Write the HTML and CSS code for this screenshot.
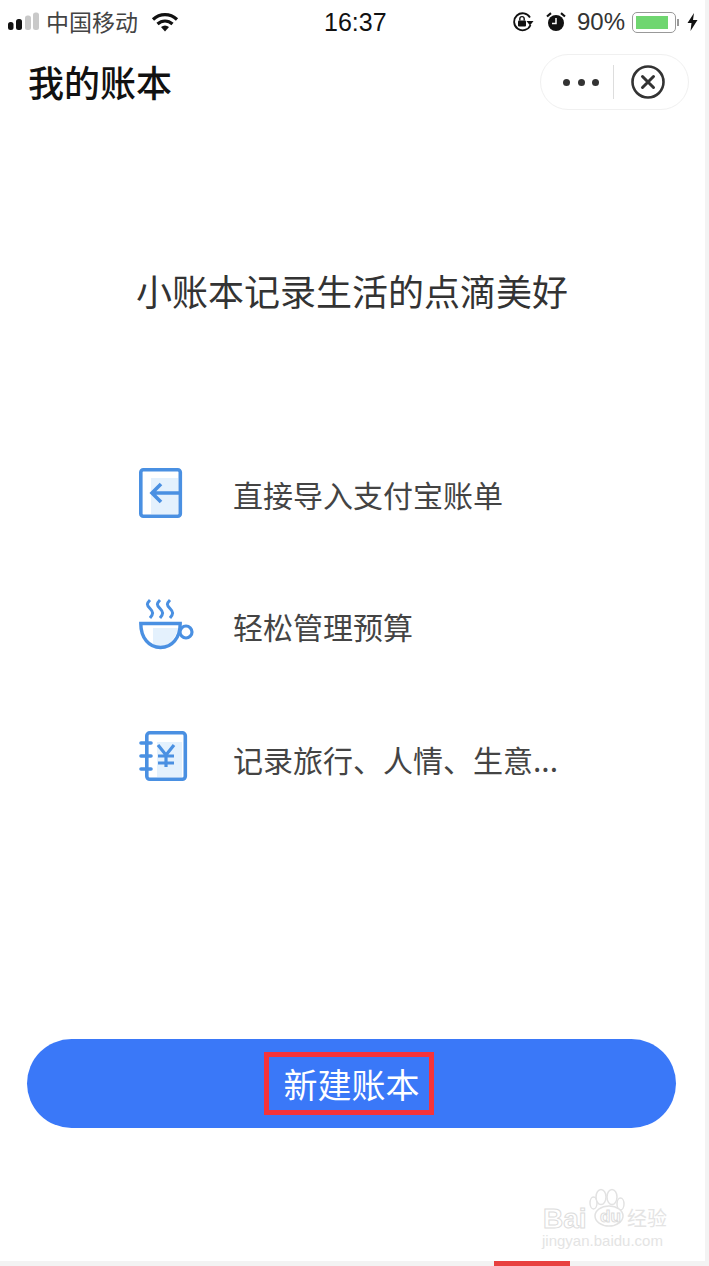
FILE: index.html
```html
<!DOCTYPE html>
<html lang="zh-CN">
<head>
  <meta charset="UTF-8" />
  <title>我的账本</title>
  <link rel="stylesheet" href="styles.css">
</head>
<body>
  <div class="screen">

    <div class="status-bar">
      <div class="status-left">
        <svg class="signal" width="32" height="20" viewBox="0 0 32 20">
          <rect x="0" y="10" width="5.5" height="8" rx="2.5" fill="#111"/>
          <rect x="8" y="7" width="6" height="11" rx="2.5" fill="#111"/>
          <rect x="17" y="3.5" width="6" height="14.5" rx="2.5" fill="#c9c9c9"/>
          <rect x="25" y="0.5" width="6" height="17.5" rx="2.5" fill="#c9c9c9"/>
        </svg>
        <span class="carrier">中国移动</span>
        <svg class="wifi" width="28" height="20" viewBox="0 0 28 20">
          <path d="M2 7.5 C9 1 19 1 26 7.5" fill="none" stroke="#111" stroke-width="3.2"/>
          <path d="M6.5 12 C11 8 17 8 21.5 12" fill="none" stroke="#111" stroke-width="3.2"/>
          <path d="M10 15 C12.5 13 15.5 13 18 15 L14 19.5Z" fill="#111"/>
        </svg>
      </div>
      <div class="status-time">16:37</div>
      <div class="status-right">
        <svg class="rotate-lock" width="22" height="20" viewBox="0 0 22 20">
          <path d="M18.5 13 A8.5 8.5 0 1 1 18 5.5" fill="none" stroke="#111" stroke-width="1.8"/>
          <path d="M21.5 9 L18 13.5 L14.5 9Z" fill="#111"/>
          <rect x="6" y="8.5" width="8" height="6" rx="1" fill="#111"/>
          <path d="M7.8 8.5 V6.8 A2.2 2.2 0 0 1 12.2 6.8 V8.5" fill="none" stroke="#111" stroke-width="1.4"/>
        </svg>
        <svg class="alarm" width="20" height="20" viewBox="0 0 20 20">
          <circle cx="10" cy="11" r="8" fill="#111"/>
          <path d="M10 6 V11.5 H6" fill="none" stroke="#fff" stroke-width="1.5"/>
          <path d="M1 4.5 L5 1.2 M19 4.5 L15 1.2" stroke="#111" stroke-width="2.2"/>
        </svg>
        <span class="battery-pct">90%</span>
        <div class="battery"><div class="battery-level"></div></div>
        <div class="battery-nub"></div>
        <svg class="bolt" width="11" height="18" viewBox="0 0 11 18">
          <path d="M7 0 L0.5 10 H4.5 L3.5 18 L10.5 7 H6Z" fill="#111"/>
        </svg>
      </div>
    </div>

    <div class="nav-bar">
      <h1 class="page-title">我的账本</h1>
      <div class="capsule">
        <div class="capsule-dots"><i></i><i></i><i></i></div>
        <div class="capsule-line"></div>
        <svg width="36" height="36" viewBox="0 0 36 36">
          <circle cx="18" cy="18" r="15.5" fill="none" stroke="#333" stroke-width="2.6"/>
          <path d="M12.5 12.5 L23.5 23.5 M23.5 12.5 L12.5 23.5" stroke="#333" stroke-width="3" stroke-linecap="round"/>
        </svg>
      </div>
    </div>

    <h2 class="slogan">小账本记录生活的点滴美好</h2>

    <div class="feature-list">
      <div class="feature">
        <svg width="60" height="60" viewBox="0 0 60 60">
          <rect x="14" y="13" width="27" height="36" fill="#e4f1fd"/>
          <rect x="3.8" y="4.8" width="39.5" height="46.5" rx="2.5" fill="none" stroke="#4a90e2" stroke-width="3.6"/>
          <path d="M15 28 H43 M24 19 L15 28 L24 37" fill="none" stroke="#4a90e2" stroke-width="3.6"/>
        </svg>
        <span>直接导入支付宝账单</span>
      </div>
      <div class="feature">
        <svg width="60" height="60" viewBox="0 0 60 60">
          <path d="M16 30 H41 C39 40 32 48 24 48 H16Z" fill="#e4f1fd"/>
          <path d="M3.8 25.5 H43.2 C43.2 40 35 49.5 23.5 49.5 C12 49.5 3.8 40 3.8 25.5Z" fill="none" stroke="#4a90e2" stroke-width="3.4"/>
          <circle cx="49" cy="34" r="6" fill="none" stroke="#4a90e2" stroke-width="3.2"/>
          <path d="M13 2 C9.5 5.5 9.5 7 13 10.5 C16.5 14 16.5 16 13 20 M23 2 C19.5 5.5 19.5 7 23 10.5 C26.5 14 26.5 16 23 20 M33 2 C29.5 5.5 29.5 7 33 10.5 C36.5 14 36.5 16 33 20" fill="none" stroke="#4a90e2" stroke-width="3"/>
        </svg>
        <span>轻松管理预算</span>
      </div>
      <div class="feature">
        <svg width="60" height="60" viewBox="0 0 60 60">
          <rect x="20" y="12" width="25" height="35" fill="#e4f1fd"/>
          <rect x="9.8" y="2.8" width="38.5" height="46.5" rx="3" fill="none" stroke="#4a90e2" stroke-width="3.6"/>
          <path d="M4 13 H14 M4 26 H14 M4 39 H14" stroke="#4a90e2" stroke-width="3.6" stroke-linecap="round"/>
          <path d="M21 15 L29 25 L37 15 M29 25 V37 M21 26 H37 M21 33 H37" fill="none" stroke="#4a90e2" stroke-width="3.2"/>
        </svg>
        <span>记录旅行、人情、生意...</span>
      </div>
    </div>

    <button class="create-btn"><span class="create-label">新建账本</span></button>

    <div class="watermark">
      <svg class="paw" width="40" height="40" viewBox="0 0 40 40">
        <g fill="#fff" stroke="#e2e2e2" stroke-width="1.5">
          <ellipse cx="4.5" cy="15" rx="3.5" ry="6"/>
          <ellipse cx="12" cy="9" rx="5" ry="7.5"/>
          <ellipse cx="23" cy="9" rx="5" ry="7.5"/>
          <ellipse cx="31.5" cy="16" rx="3.5" ry="6"/>
          <ellipse cx="20" cy="28" rx="14" ry="10"/>
        </g>
      </svg>
      <span class="wm-bai">Bai</span>
      <span class="wm-du">du</span>
      <span class="wm-jy">经验</span>
      <span class="wm-url">jingyan.baidu.com</span>
    </div>
  </div>
  <div class="page-foot"><div class="red-tab"></div></div>
</body>
</html>
```

FILE: styles.css
```css
* {
  box-sizing: border-box;
}

body {
  margin: 0;
  background-color: #f3f3f3;
  font-family: "Noto Sans CJK SC", "Liberation Sans", sans-serif;
  color: #333;
}

.screen {
  position: relative;
  width: 705px;
  height: 1261px;
  background-color: #fff;
}

.status-bar {
  display: flex;
  align-items: center;
  height: 44px;
  color: #222;
}

.status-left {
  display: flex;
  align-items: center;
  width: 324px;
  padding-left: 8px;
}

.signal {
  margin-right: 6px;
}

.carrier {
  font-size: 23px;
  color: #444;
  margin-right: 13px;
  padding-bottom: 2px;
}

.status-time {
  width: 181px;
  font-family: "Liberation Sans", sans-serif;
  font-size: 25px;
  color: #111;
}

.status-right {
  display: flex;
  align-items: center;
  margin-left: 7px;
}

.alarm {
  margin-left: 12px;
}

.battery-pct {
  font-family: "Liberation Sans", sans-serif;
  font-size: 24px;
  color: #333;
  margin-left: 11px;
  margin-right: 7px;
}

.battery {
  width: 44px;
  height: 21px;
  padding: 3px;
  border: 1.5px solid #999;
  border-radius: 5px;
}

.battery-level {
  width: 90%;
  height: 100%;
  background-color: #6fd670;
}

.battery-nub {
  width: 2px;
  height: 7px;
  margin-left: 1px;
  background-color: #999;
}

.bolt {
  margin-left: 8px;
}

.nav-bar {
  display: flex;
  justify-content: space-between;
  height: 76px;
  padding: 10px 16px 0 28px;
}

.page-title {
  margin: 0;
  font-size: 36px;
  font-weight: 500;
  line-height: 54px;
  color: #111;
}

.capsule {
  display: flex;
  align-items: center;
  width: 149px;
  height: 56px;
  padding-left: 22px;
  border: 1px solid #f0f0f0;
  border-radius: 28px;
}

.capsule-dots {
  display: flex;
  gap: 7.5px;
}

.capsule-dots i {
  width: 7px;
  height: 7px;
  border-radius: 50%;
  background-color: #333;
}

.capsule-line {
  width: 1px;
  height: 34px;
  margin: 0 16px 0 14px;
  background-color: #ddd;
}

.slogan {
  margin: 145px 0 0;
  padding-left: 136px;
  font-size: 36px;
  font-weight: 400;
  line-height: 50px;
  color: #333;
}

.feature-list {
  display: flex;
  flex-direction: column;
  gap: 72.5px;
  margin-top: 150px;
  padding-left: 137px;
}

.feature {
  display: flex;
  align-items: center;
  gap: 36px;
  height: 60px;
  font-size: 30px;
  color: #444;
}

.feature span {
  padding-bottom: 3px;
}

.create-btn {
  display: flex;
  align-items: center;
  justify-content: center;
  width: 649px;
  height: 89px;
  margin: 249px 0 0 27px;
  padding: 0;
  border: none;
  border-radius: 45px;
  background-color: #3a78f8;
  font-family: inherit;
}

.create-label {
  width: 170px;
  height: 63px;
  margin-right: 6px;
  padding-left: 6px;
  border: 5px solid #f5333a;
  font-size: 34px;
  line-height: 53px;
  color: #fff;
  text-align: center;
  white-space: nowrap;
}

.watermark {
  position: absolute;
  left: 540px;
  top: 1188px;
  width: 132px;
  height: 64px;
}

.paw {
  position: absolute;
  left: 49px;
  top: 0;
}

.wm-bai, .wm-du {
  position: absolute;
  font-family: "Liberation Sans", sans-serif;
  font-weight: 700;
  color: #fff;
  -webkit-text-stroke: 1px #dcdcdc;
}

.wm-bai {
  left: 3px;
  top: 15px;
  font-size: 28px;
}

.wm-du {
  left: 60px;
  top: 19px;
  font-size: 17px;
}

.wm-jy {
  position: absolute;
  left: 87px;
  top: 15px;
  font-size: 20px;
  color: #e4e4e4;
}

.wm-url {
  position: absolute;
  left: 2px;
  top: 44px;
  font-family: "Liberation Sans", sans-serif;
  font-size: 15px;
  color: #e4e4e4;
  white-space: nowrap;
}

.page-foot {
  height: 5px;
  padding-left: 494px;
}

.red-tab {
  width: 76px;
  height: 5px;
  background-color: #e8403f;
}
```
